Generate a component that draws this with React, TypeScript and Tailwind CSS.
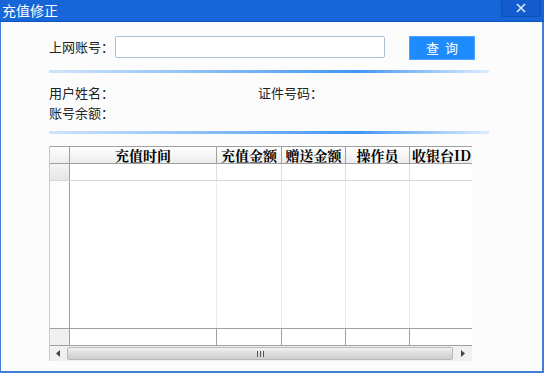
import React from 'react';

const cols = ['充值时间', '充值金额', '赠送金额', '操作员', '收银台ID'];
const grid = 'grid grid-cols-[20px_147px_65px_64px_64px_63px]';

function Line() {
  return (
    <div className="h-[3px] w-[440px] bg-gradient-to-r from-[#cfe4fb] via-[#3d96f2] via-70% to-[#dcecfd]" />
  );
}

export default function App() {
  return (
    <div
      className="w-[544px] h-[373px] bg-[#3f7fd6] p-[1px] pt-0 flex flex-col overflow-hidden"
      style={{ fontFamily: '"Noto Sans CJK SC", "Noto Sans", sans-serif' }}
    >
      <div className="h-[22px] flex items-start justify-between bg-[#1766d9] border-b border-[#0f55bd] -mx-[1px]">
        <span className="text-white text-[14px] leading-[20px] pl-[2px]">充值修正</span>
        <div className="w-[40px] h-[17px] mr-[3px] bg-[#135cce] rounded-b-[3px] border-x border-b border-[#0d4fb6] flex items-center justify-center">
          <svg width="10" height="10" viewBox="0 0 10 10">
            <path d="M1 1L9 9M9 1L1 9" stroke="#dfeaff" strokeWidth="1.6" />
          </svg>
        </div>
      </div>
      <div className="flex-1 bg-[#fcfcfc] mr-[1px] mb-[1px] pl-[48px] pt-[14px] flex flex-col text-[13px] text-[#222]">
        <div className="flex items-start h-[25px]">
          <span className="w-[66px] leading-[22px]">上网账号：</span>
          <div className="w-[270px] h-[22px] border border-[#a9c2da] rounded-[2px] bg-white" />
          <button className="ml-[24px] w-[66px] h-[24px] bg-[#1e8cff] border border-[#4aa2ff] text-white text-[13px] tracking-[6px] pl-[6px]">
            查询
          </button>
        </div>
        <div className="mt-[9px]">
          <Line />
        </div>
        <div className="flex mt-[10px] leading-[20px]">
          <span className="w-[209px]">用户姓名：</span>
          <span>证件号码：</span>
        </div>
        <div className="leading-[20px]">账号余额：</div>
        <div className="mt-[8px]">
          <Line />
        </div>
        <div className="mt-[12px] w-[423px] flex flex-col border-l border-[#c8c8c8]">
          <div className={`${grid} h-[18px] border-y border-[#a0a0a0] bg-gradient-to-b from-[#ffffff] to-[#ececec]`}>
            <div className="border-r border-[#a0a0a0]" />
            {cols.map((c) => (
              <div
                key={c}
                className="border-r border-[#a0a0a0] last:border-r-0 text-center font-bold text-[14px] leading-[16px] text-black whitespace-nowrap"
                style={{ fontFamily: '"Noto Serif CJK SC", "Noto Sans CJK SC", serif' }}
              >
                {c}
              </div>
            ))}
          </div>
          <div className={`${grid} h-[17px] border-b border-[#d6d6d6] bg-white`}>
            <div className="border-r border-[#a0a0a0] bg-gradient-to-b from-[#f4f4f4] to-[#e6e6e6]" />
            {cols.map((c) => (
              <div key={c} className="border-r border-[#e0e0e0] last:border-r-0" />
            ))}
          </div>
          <div className={`${grid} h-[147px] bg-white`}>
            <div className="border-r border-[#a0a0a0] bg-[#fdfdfd]" />
            {cols.map((c) => (
              <div key={c} className="border-r border-[#ececec] last:border-r-0" />
            ))}
          </div>
          <div className={`${grid} h-[18px] border-y border-[#a0a0a0] bg-white`}>
            <div className="border-r border-[#a0a0a0] bg-[#f0f0f0]" />
            {cols.map((c) => (
              <div key={c} className="border-r border-[#a0a0a0] last:border-r-0" />
            ))}
          </div>
          <div className="h-[15px] flex bg-[#f0f0f0]">
            <div className="w-[17px] flex items-center justify-center">
              <svg width="5" height="7" viewBox="0 0 5 7">
                <path d="M4 0L0 3.5L4 7Z" fill="#444" />
              </svg>
            </div>
            <div className="flex-1 my-[1px] rounded-[2px] border border-[#b8b8b8] bg-gradient-to-b from-[#f2f2f2] via-[#dcdcdc] to-[#cfcfcf] flex items-center justify-center">
              <svg width="7" height="6" viewBox="0 0 7 6">
                <path d="M0.5 0V6M3.5 0V6M6.5 0V6" stroke="#555" strokeWidth="1" />
              </svg>
            </div>
            <div className="w-[19px] flex items-center justify-center">
              <svg width="5" height="7" viewBox="0 0 5 7">
                <path d="M1 0L5 3.5L1 7Z" fill="#444" />
              </svg>
            </div>
          </div>
        </div>
      </div>
    </div>
  );
}
